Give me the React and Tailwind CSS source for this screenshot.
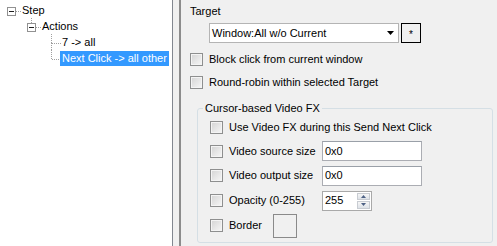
import React from 'react';

const DOT = '#a0a0a0';

// one 20x16 indent cell of the tree view, drawn like the Win32 tree lines
const TreeCell = ({ box, up, down, across }) => (
  <svg width="20" height="16" className="shrink-0">
    {up && <line x1="10.5" y1="0" x2="10.5" y2={box ? 5 : 9} stroke={DOT} strokeDasharray="1 1" />}
    {down && <line x1="10.5" y1={box ? 14 : 9} x2="10.5" y2="16" stroke={DOT} strokeDasharray="1 1" />}
    {across && <line x1={box ? 15 : 11} y1="9.5" x2="20" y2="9.5" stroke={DOT} strokeDasharray="1 1" />}
    {box && (
      <>
        <rect x="6.5" y="5.5" width="8" height="8" fill="#fff" stroke="#919191" />
        <line x1="8" y1="9.5" x2="13" y2="9.5" stroke="#1e1e1e" />
      </>
    )}
  </svg>
);

const TreeRow = ({ cells, label, selected }) => (
  <div className="flex h-[16px] items-center">
    {cells}
    <span
      className={`ml-[-1px] px-[2px] leading-[15px] whitespace-nowrap ${
        selected ? 'bg-[#3399ff] text-white' : 'text-black'
      }`}
    >
      {label}
    </span>
  </div>
);

const Blank = () => <div className="w-[20px] shrink-0" />;

const Check = () => (
  <div className="w-[13px] h-[13px] shrink-0 border border-[#8e8f8f] bg-gradient-to-br from-[#d4d4d4] to-[#f7f7f7] shadow-[inset_0_0_0_1px_#f4f4f4]" />
);

const CheckRow = ({ label, className = '' }) => (
  <div className={`flex items-center ${className}`}>
    <Check />
    <span className="ml-[6px] whitespace-nowrap">{label}</span>
  </div>
);

const TextBox = ({ value, className = '' }) => (
  <div className={`h-[20px] bg-white border border-[#abadb3] border-t-[#9aa0a8] flex items-center pl-[2px] ${className}`}>
    {value}
  </div>
);

const Spinner = () => (
  <div className="w-[50px] h-[20px] bg-white border border-[#a9a9a9] flex">
    <div className="flex-1 flex items-center pl-[2px]">255</div>
    <div className="w-[15px] flex flex-col gap-[1px] p-[1px]">
      {[0, 1].map((i) => (
        <div
          key={i}
          className="flex-1 flex items-center justify-center border border-[#c8ccd2] bg-gradient-to-b from-[#f6f6f6] to-[#dde2e8]"
        >
          <svg width="5" height="3">
            {i === 0 ? (
              <polygon points="0,3 5,3 2.5,0" fill="#4d6185" />
            ) : (
              <polygon points="0,0 5,0 2.5,3" fill="#4d6185" />
            )}
          </svg>
        </div>
      ))}
    </div>
  </div>
);

export default function App() {
  return (
    <div className="w-[497px] h-[246px] flex overflow-hidden bg-[#f0f0f0] text-black text-[11px] leading-[13px] font-['Liberation_Sans',Arial,sans-serif]">
      {/* tree view */}
      <div className="w-[173px] shrink-0 bg-white border-r border-[#828790] pt-[2px] pl-[1px]">
        <TreeRow cells={<TreeCell box across />} label="Step" />
        <TreeRow cells={<><Blank /><TreeCell box up across /></>} label="Actions" />
        <TreeRow cells={<><Blank /><Blank /><TreeCell up down across /></>} label="7 -> all" />
        <TreeRow cells={<><Blank /><Blank /><TreeCell up across /></>} label="Next Click -> all other" selected />
      </div>

      {/* splitter */}
      <div className="w-[6px] shrink-0 bg-[#f0f0f0]" />

      {/* properties */}
      <div className="flex-1 border-l-2 border-[#8c8c8c] pl-[9px] pt-[5px]">
        <div>Target</div>
        <div className="flex mt-[5px] ml-[19px] gap-[2px]">
          <div className="w-[190px] h-[20px] bg-white border border-[#b4b4b4] flex items-center pl-[2px]">
            <span className="flex-1">Window:All w/o Current</span>
            <svg width="7" height="4" className="mr-[4px]">
              <polygon points="0,0 7,0 3.5,4" fill="#000" />
            </svg>
          </div>
          <div className="w-[20px] h-[20px] border border-black flex items-center justify-center text-[10px] leading-none pt-[3px]">
            *
          </div>
        </div>

        <CheckRow label="Block click from current window" className="mt-[10px] h-[13px]" />
        <CheckRow label="Round-robin within selected Target" className="mt-[10px] h-[13px]" />

        <fieldset className="mt-[13px] ml-[7px] w-[296px] border border-[#d5dfe5] rounded-[3px] pl-[12px] pb-[4px]">
          <legend className="ml-[-7px] px-[2px]">Cursor-based Video FX</legend>
          <CheckRow label="Use Video FX during this Send Next Click" className="h-[24px]" />
          <div className="flex items-center h-[24px]">
            <CheckRow label="Video source size" className="w-[112px]" />
            <TextBox value="0x0" className="w-[100px]" />
          </div>
          <div className="flex items-center h-[25px]">
            <CheckRow label="Video output size" className="w-[112px]" />
            <TextBox value="0x0" className="w-[100px]" />
          </div>
          <div className="flex items-center h-[25px]">
            <CheckRow label="Opacity (0-255)" className="w-[112px]" />
            <Spinner />
          </div>
          <div className="flex items-center h-[25px]">
            <CheckRow label="Border" className="w-[63px]" />
            <div className="w-[24px] h-[24px] border border-[#8a8a8a]" />
          </div>
        </fieldset>
      </div>
    </div>
  );
}
